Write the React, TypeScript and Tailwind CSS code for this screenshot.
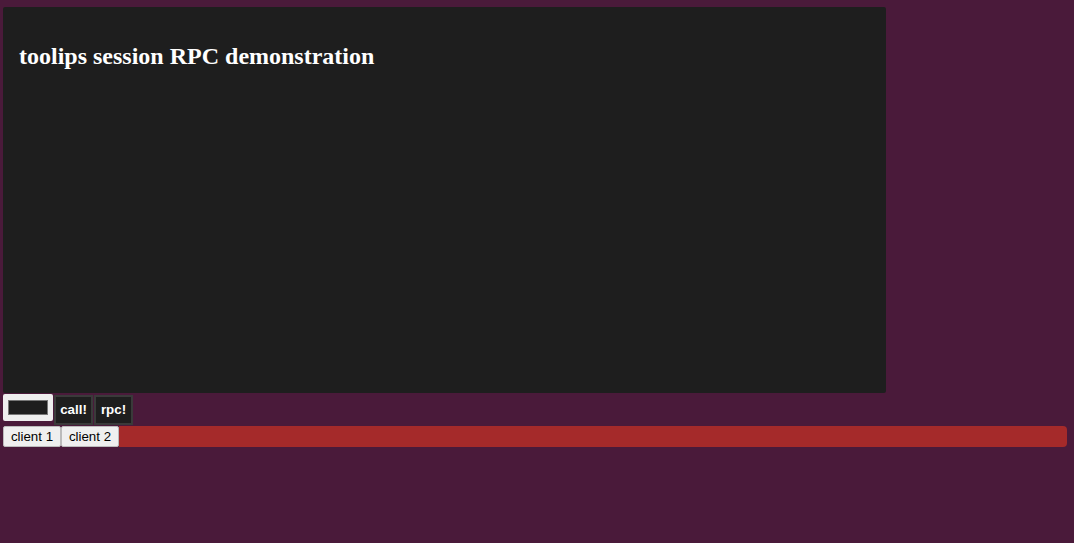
import * as React from "react";

export default function App() {
  return (
    <div className="min-h-[543px] w-full bg-[#4a1a3a] pl-[3px] pt-[7px] font-['Liberation_Sans',Arial,sans-serif]">
      <div className="h-[386px] w-[883px] rounded-[2px] bg-[#1e1e1e] px-4 pt-[36px]">
        <h2 className="font-['Liberation_Serif','Times_New_Roman',serif] text-[24px] font-bold leading-[27px] text-white">
          toolips session RPC demonstration
        </h2>
      </div>

      <div className="flex h-[33px] items-start">
        <div className="mt-px flex h-[27px] w-[50px] items-center justify-center rounded-[2px] bg-[#eeeeee]">
          <input
            className="h-[15px] w-[40px] border border-[#777] bg-[#1e1e1e] outline-none"
            aria-label="input"
          />
        </div>
        <button className="ml-px mt-[2px] h-[30px] w-[39px] border-2 border-[#3a3a3a] bg-[#1e1e1e] text-[13.33px] font-bold text-white">
          call!
        </button>
        <button className="ml-px mt-[2px] h-[30px] w-[39px] border-2 border-[#3a3a3a] bg-[#1e1e1e] text-[13.33px] font-bold text-white">
          rpc!
        </button>
      </div>

      <div className="flex h-[21px] w-[1064px] items-stretch">
        <button className="w-[58px] rounded-[2px] border border-[#bbbbbb] bg-[#efefef] text-[13.33px] text-black">
          client 1
        </button>
        <button className="w-[58px] rounded-[2px] border border-[#bbbbbb] bg-[#efefef] text-[13.33px] text-black">
          client 2
        </button>
        <div className="flex-1 rounded-r-[4px] bg-[#a52a2a]" />
      </div>
    </div>
  );
}
